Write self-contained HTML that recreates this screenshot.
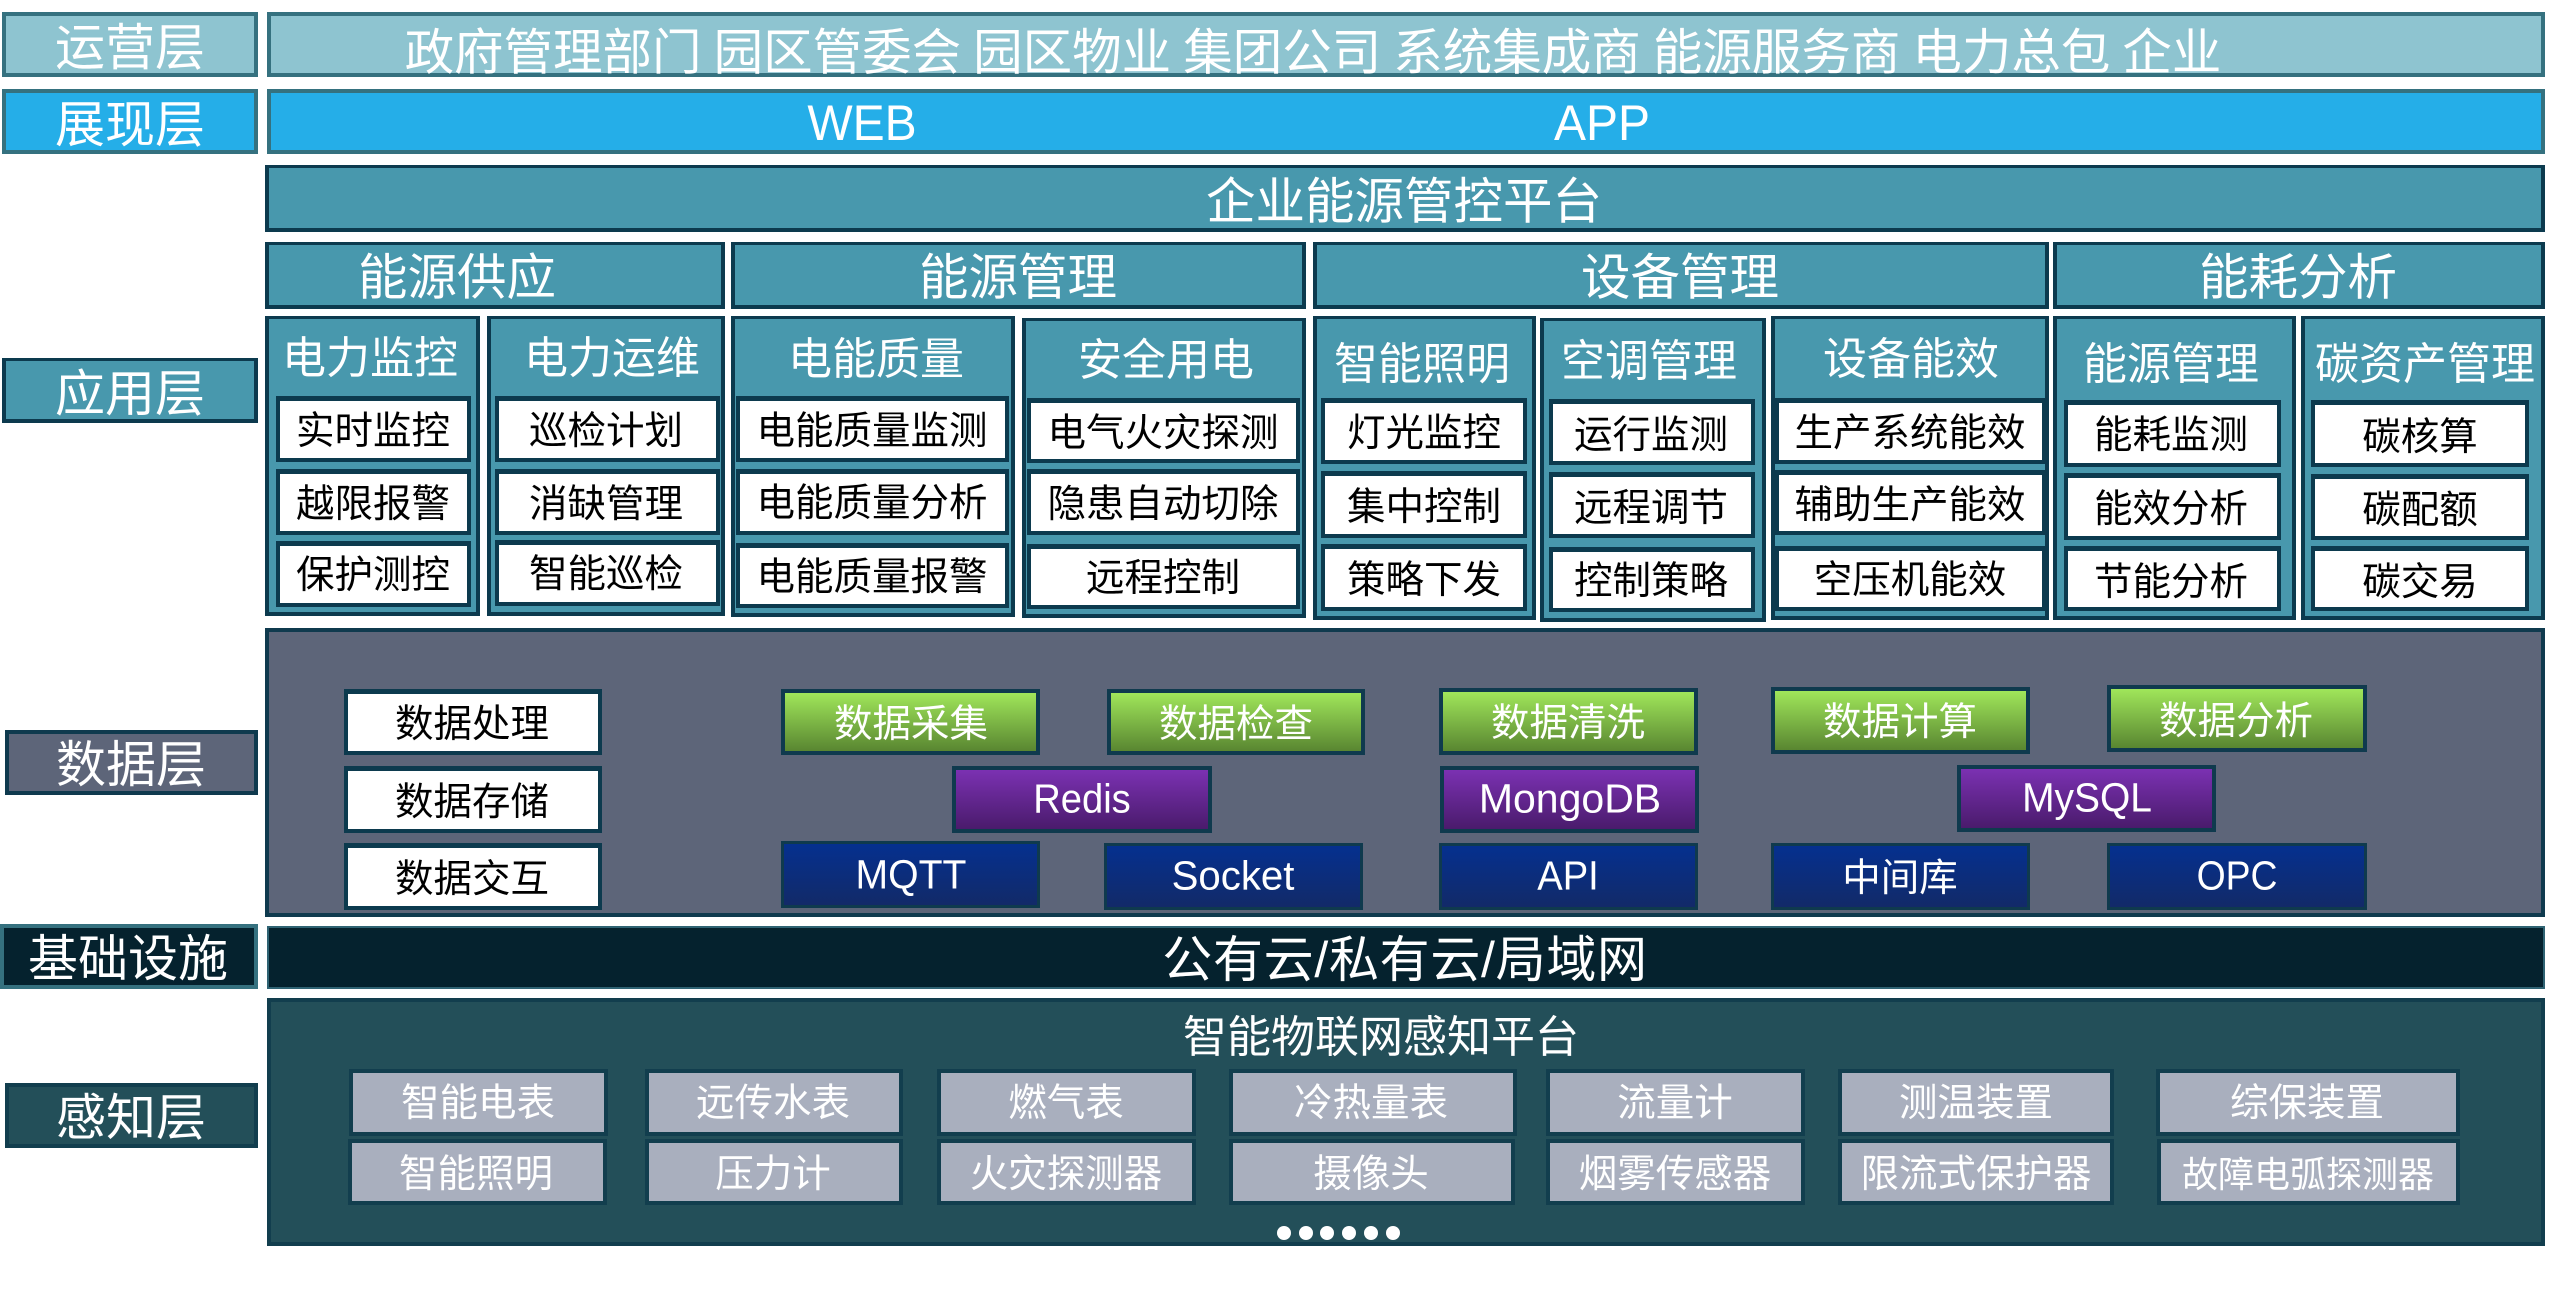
<!DOCTYPE html>
<html lang="zh-CN">
<head>
<meta charset="utf-8">
<title>企业能源管控平台</title>
<style>
html,body{margin:0;padding:0;background:#fff}
body{position:relative;width:2560px;height:1303px;overflow:hidden;font-family:"Liberation Sans","Noto Sans CJK SC",sans-serif}
div{position:absolute;box-sizing:border-box}
.a{background:#8EC4D0;border:4px solid #35717F}
.p{background:#25AEE8;border:4px solid #35717F}
.g{background:#4898AD;border:4px solid #0C3A4E;border-top-width:3px}
.w{background:#fff;border:4px solid #0C3A4E;border-top-width:5px}
.d{background:#5D6579;border:4px solid #0F3A4E}
.i{background:#05222E;border:2px solid #2F6373}
.s{background:#234F59;border:4px solid #123E4E}
.c{background:linear-gradient(#A0E65A,#598631);border:4px solid #0F3A4E}
.m{background:linear-gradient(#7B31B2,#4A1B6C);border:4px solid #0F3A4E}
.b{background:linear-gradient(#05308F,#122A68);border:3px solid #0F3A4E}
.v{background:#A9AFBE;border:4px solid #123E4E}
.o{width:14px;height:14px;border-radius:50%;background:#fff;top:1226px}
.t{transform:translate(-50%,-50%);white-space:nowrap;line-height:1;color:#fff;font-size:50px;margin-top:3px}
.r{font-size:49.5px}
.h{font-size:44px}
.k{font-size:38.5px;color:#000}
.n{font-size:38.5px;margin-top:2px}
.l{font-size:41px;margin-top:0}
</style>
</head>
<body>
<div class="a" style="left:2px;top:12px;width:256px;height:65px"></div>
<div class="a" style="left:267px;top:12px;width:2278px;height:65px"></div>
<div class="p" style="left:2px;top:89px;width:256px;height:65px"></div>
<div class="p" style="left:267px;top:89px;width:2278px;height:65px"></div>
<div class="g" style="left:2px;top:358px;width:256px;height:65px"></div>
<div class="g" style="left:265px;top:165px;width:2280px;height:67px"></div>
<div class="g" style="left:265px;top:242px;width:460px;height:67px"></div>
<div class="g" style="left:731px;top:242px;width:575px;height:67px"></div>
<div class="g" style="left:1313px;top:242px;width:736px;height:67px"></div>
<div class="g" style="left:2053px;top:242px;width:492px;height:67px"></div>

<div class="g" style="left:265px;top:316px;width:215px;height:300px"></div>
<div class="g" style="left:487px;top:316px;width:238px;height:300px"></div>
<div class="g" style="left:731px;top:316px;width:284px;height:301px"></div>
<div class="g" style="left:1022px;top:318px;width:284px;height:300px"></div>
<div class="g" style="left:1313px;top:316px;width:223px;height:304px"></div>
<div class="g" style="left:1540px;top:318px;width:226px;height:304px"></div>
<div class="g" style="left:1771px;top:316px;width:278px;height:304px"></div>
<div class="g" style="left:2053px;top:316px;width:243px;height:304px"></div>
<div class="g" style="left:2301px;top:316px;width:244px;height:304px"></div>

<div class="w" style="left:276px;top:396px;width:195px;height:66px"></div>
<div class="w" style="left:276px;top:469px;width:195px;height:66px"></div>
<div class="w" style="left:276px;top:541px;width:195px;height:66px"></div>
<div class="w" style="left:495px;top:396px;width:225px;height:66px"></div>
<div class="w" style="left:495px;top:469px;width:225px;height:66px"></div>
<div class="w" style="left:495px;top:540px;width:225px;height:66px"></div>
<div class="w" style="left:736px;top:396px;width:273px;height:66px"></div>
<div class="w" style="left:736px;top:469px;width:273px;height:66px"></div>
<div class="w" style="left:736px;top:543px;width:273px;height:65px"></div>
<div class="w" style="left:1027px;top:398px;width:273px;height:65px"></div>
<div class="w" style="left:1027px;top:469px;width:273px;height:66px"></div>
<div class="w" style="left:1027px;top:544px;width:273px;height:65px"></div>
<div class="w" style="left:1321px;top:398px;width:206px;height:66px"></div>
<div class="w" style="left:1321px;top:471px;width:206px;height:67px"></div>
<div class="w" style="left:1321px;top:544px;width:206px;height:67px"></div>
<div class="w" style="left:1549px;top:399px;width:206px;height:66px"></div>
<div class="w" style="left:1549px;top:472px;width:206px;height:66px"></div>
<div class="w" style="left:1549px;top:547px;width:206px;height:65px"></div>
<div class="w" style="left:1775px;top:398px;width:271px;height:66px"></div>
<div class="w" style="left:1775px;top:470px;width:271px;height:65px"></div>
<div class="w" style="left:1775px;top:546px;width:271px;height:65px"></div>
<div class="w" style="left:2064px;top:400px;width:217px;height:67px"></div>
<div class="w" style="left:2064px;top:473px;width:217px;height:67px"></div>
<div class="w" style="left:2064px;top:546px;width:217px;height:65px"></div>
<div class="w" style="left:2311px;top:400px;width:218px;height:67px"></div>
<div class="w" style="left:2311px;top:474px;width:218px;height:66px"></div>
<div class="w" style="left:2311px;top:546px;width:218px;height:65px"></div>

<div class="d" style="left:5px;top:730px;width:253px;height:65px"></div>
<div class="d" style="left:265px;top:628px;width:2280px;height:289px"></div>
<div class="w" style="left:344px;top:689px;width:258px;height:66px"></div>
<div class="w" style="left:344px;top:766px;width:258px;height:67px"></div>
<div class="w" style="left:344px;top:843px;width:258px;height:67px"></div>
<div class="c" style="left:781px;top:689px;width:259px;height:66px"></div>
<div class="c" style="left:1107px;top:689px;width:258px;height:66px"></div>
<div class="c" style="left:1439px;top:688px;width:259px;height:67px"></div>
<div class="c" style="left:1771px;top:687px;width:259px;height:67px"></div>
<div class="c" style="left:2107px;top:685px;width:260px;height:67px"></div>
<div class="m" style="left:952px;top:766px;width:260px;height:67px"></div>
<div class="m" style="left:1440px;top:766px;width:259px;height:67px"></div>
<div class="m" style="left:1957px;top:765px;width:259px;height:67px"></div>
<div class="b" style="left:781px;top:841px;width:259px;height:67px"></div>
<div class="b" style="left:1104px;top:843px;width:259px;height:67px"></div>
<div class="b" style="left:1439px;top:843px;width:259px;height:67px"></div>
<div class="b" style="left:1771px;top:843px;width:259px;height:67px"></div>
<div class="b" style="left:2107px;top:843px;width:260px;height:67px"></div>

<div class="i" style="left:0;top:924px;width:258px;height:65px;border-width:4px;border-color:#35717F"></div>
<div class="i" style="left:267px;top:926px;width:2278px;height:63px"></div>

<div class="s" style="left:5px;top:1083px;width:253px;height:65px"></div>
<div class="s" style="left:267px;top:998px;width:2278px;height:248px"></div>
<div class="v" style="left:349px;top:1069px;width:259px;height:67px"></div>
<div class="v" style="left:645px;top:1069px;width:258px;height:67px"></div>
<div class="v" style="left:937px;top:1069px;width:259px;height:67px"></div>
<div class="v" style="left:1229px;top:1069px;width:288px;height:67px"></div>
<div class="v" style="left:1546px;top:1069px;width:259px;height:67px"></div>
<div class="v" style="left:1838px;top:1069px;width:276px;height:67px"></div>
<div class="v" style="left:2156px;top:1069px;width:304px;height:67px"></div>
<div class="v" style="left:348px;top:1139px;width:259px;height:66px"></div>
<div class="v" style="left:645px;top:1139px;width:258px;height:66px"></div>
<div class="v" style="left:937px;top:1139px;width:259px;height:66px"></div>
<div class="v" style="left:1229px;top:1139px;width:286px;height:66px"></div>
<div class="v" style="left:1546px;top:1139px;width:259px;height:66px"></div>
<div class="v" style="left:1838px;top:1139px;width:276px;height:66px"></div>
<div class="v" style="left:2157px;top:1139px;width:303px;height:66px"></div>
<div class="o" style="left:1277px"></div><div class="o" style="left:1299px"></div><div class="o" style="left:1320px"></div><div class="o" style="left:1342px"></div><div class="o" style="left:1364px"></div><div class="o" style="left:1386px"></div>

<div class="t" style="left:130px;top:45px">运营层</div>
<div class="t" style="left:1313px;top:50px;font-size:49.5px;word-spacing:-1.7px">政府管理部门 园区管委会 园区物业 集团公司 系统集成商 能源服务商 电力总包 企业</div>
<div class="t" style="left:130px;top:122px">展现层</div>
<div class="t" style="left:862px;top:122px;margin-top:1px;transform:translate(-50%,-50%) scaleX(.96)">WEB</div>
<div class="t" style="left:1602px;top:122px;margin-top:1px;transform:translate(-50%,-50%) scaleX(.96)">APP</div>
<div class="t r" style="left:1404px;top:199px">企业能源管控平台</div>
<div class="t" style="left:130px;top:391px">应用层</div>
<div class="t r" style="left:457px;top:275px">能源供应</div>
<div class="t r" style="left:1018px;top:275px">能源管理</div>
<div class="t r" style="left:1680px;top:275px">设备管理</div>
<div class="t r" style="left:2298px;top:275px">能耗分析</div>

<div class="t h" style="left:370px;top:356px">电力监控</div>
<div class="t h" style="left:612px;top:356px">电力运维</div>
<div class="t h" style="left:876px;top:357px">电能质量</div>
<div class="t h" style="left:1166px;top:358px">安全用电</div>
<div class="t h" style="left:1422px;top:362px">智能照明</div>
<div class="t h" style="left:1649px;top:359px">空调管理</div>
<div class="t h" style="left:1911px;top:357px">设备能效</div>
<div class="t h" style="left:2171px;top:362px">能源管理</div>
<div class="t h" style="left:2425px;top:362px">碳资产管理</div>

<div class="t k" style="left:373px;top:429px">实时监控</div>
<div class="t k" style="left:373px;top:502px">越限报警</div>
<div class="t k" style="left:373px;top:573px">保护测控</div>
<div class="t k" style="left:606px;top:429px">巡检计划</div>
<div class="t k" style="left:606px;top:502px">消缺管理</div>
<div class="t k" style="left:606px;top:572px">智能巡检</div>
<div class="t k" style="left:872px;top:429px">电能质量监测</div>
<div class="t k" style="left:872px;top:501px">电能质量分析</div>
<div class="t k" style="left:872px;top:575px">电能质量报警</div>
<div class="t k" style="left:1163px;top:431px">电气火灾探测</div>
<div class="t k" style="left:1163px;top:502px">隐患自动切除</div>
<div class="t k" style="left:1163px;top:576px">远程控制</div>
<div class="t k" style="left:1424px;top:431px">灯光监控</div>
<div class="t k" style="left:1424px;top:505px">集中控制</div>
<div class="t k" style="left:1424px;top:578px">策略下发</div>
<div class="t k" style="left:1651px;top:433px">运行监测</div>
<div class="t k" style="left:1651px;top:506px">远程调节</div>
<div class="t k" style="left:1651px;top:579px">控制策略</div>
<div class="t k" style="left:1910px;top:431px">生产系统能效</div>
<div class="t k" style="left:1910px;top:503px">辅助生产能效</div>
<div class="t k" style="left:1910px;top:578px">空压机能效</div>
<div class="t k" style="left:2171px;top:433px">能耗监测</div>
<div class="t k" style="left:2171px;top:507px">能效分析</div>
<div class="t k" style="left:2171px;top:580px">节能分析</div>
<div class="t k" style="left:2420px;top:435px">碳核算</div>
<div class="t k" style="left:2420px;top:508px">碳配额</div>
<div class="t k" style="left:2420px;top:580px">碳交易</div>

<div class="t" style="left:131px;top:762px">数据层</div>
<div class="t k" style="left:472px;top:722px">数据处理</div>
<div class="t k" style="left:472px;top:800px">数据存储</div>
<div class="t k" style="left:472px;top:877px">数据交互</div>
<div class="t n" style="left:911px;top:722px;margin-top:3px">数据采集</div>
<div class="t n" style="left:1236px;top:722px;margin-top:3px">数据检查</div>
<div class="t n" style="left:1568px;top:721px;margin-top:3px">数据清洗</div>
<div class="t n" style="left:1900px;top:720px;margin-top:3px">数据计算</div>
<div class="t n" style="left:2236px;top:719px;margin-top:3px">数据分析</div>
<div class="t l" style="left:1082px;top:799px;transform:translate(-50%,-50%) scaleX(.93)">Redis</div>
<div class="t l" style="left:1570px;top:799px">MongoDB</div>
<div class="t l" style="left:2087px;top:798px;transform:translate(-50%,-50%) scaleX(.95)">MySQL</div>
<div class="t l" style="left:911px;top:875px;transform:translate(-50%,-50%) scaleX(.955)">MQTT</div>
<div class="t l" style="left:1233px;top:876px;transform:translate(-50%,-50%) scaleX(.98)">Socket</div>
<div class="t l" style="left:1568px;top:876px;transform:translate(-50%,-50%) scaleX(.93)">API</div>
<div class="t n" style="left:1900px;top:876px;margin-top:3px">中间库</div>
<div class="t l" style="left:2237px;top:876px;transform:translate(-50%,-50%) scaleX(.91)">OPC</div>

<div class="t" style="left:128px;top:956px">基础设施</div>
<div class="t" style="left:1405px;top:957px;letter-spacing:.7px">公有云/私有云/局域网</div>
<div class="t" style="left:131px;top:1115px">感知层</div>
<div class="t h" style="left:1381px;top:1036px;margin-top:2px">智能物联网感知平台</div>

<div class="t n" style="left:478px;top:1102px">智能电表</div>
<div class="t n" style="left:773px;top:1102px">远传水表</div>
<div class="t n" style="left:1066px;top:1102px">燃气表</div>
<div class="t n" style="left:1371px;top:1102px">冷热量表</div>
<div class="t n" style="left:1675px;top:1102px">流量计</div>
<div class="t n" style="left:1976px;top:1102px">测温装置</div>
<div class="t n" style="left:2307px;top:1102px">综保装置</div>
<div class="t n" style="left:476px;top:1173px">智能照明</div>
<div class="t n" style="left:773px;top:1173px">压力计</div>
<div class="t n" style="left:1066px;top:1173px">火灾探测器</div>
<div class="t n" style="left:1371px;top:1173px">摄像头</div>
<div class="t n" style="left:1675px;top:1173px">烟雾传感器</div>
<div class="t n" style="left:1976px;top:1173px">限流式保护器</div>
<div class="t n" style="left:2308px;top:1173px;font-size:36px">故障电弧探测器</div>
</body>
</html>
